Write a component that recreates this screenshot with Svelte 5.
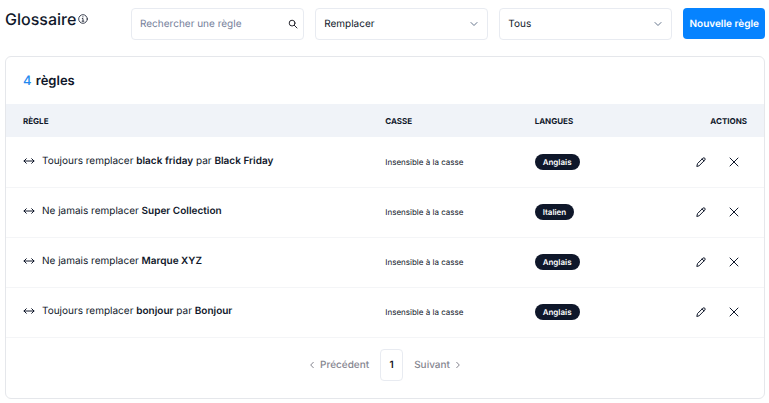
<script>
  let search = $state('');
  let mode = $state('Remplacer');
  let language = $state('Tous');

  const rules = [
    { verb: 'Toujours remplacer', source: 'black friday', target: 'Black Friday', language: 'Anglais' },
    { verb: 'Ne jamais remplacer', source: 'Super Collection', language: 'Italien' },
    { verb: 'Ne jamais remplacer', source: 'Marque XYZ', language: 'Anglais' },
    { verb: 'Toujours remplacer', source: 'bonjour', target: 'Bonjour', language: 'Anglais' }
  ];
</script>

{#snippet chevron()}
  <svg class="chevron" viewBox="0 0 8 8" width="8" height="8" aria-hidden="true"><path d="M1 2.5 4 5.5 7 2.5" /></svg>
{/snippet}

<main>
  <header>
    <h1>
      Glossaire
      <svg viewBox="0 0 10 10" width="10" height="10" aria-hidden="true">
        <circle cx="5" cy="5" r="4.3" />
        <path d="M4.3 4.5H5V7.1M4.1 7.2H5.9M4.9 2.6V3" />
      </svg>
    </h1>
    <div class="field">
      <input type="text" placeholder="Rechercher une règle" aria-label="Rechercher une règle" bind:value={search} />
      <svg class="loupe" viewBox="0 0 10 10" width="10" height="10" aria-hidden="true">
        <circle cx="4.1" cy="4.1" r="2.9" /><path d="M6.3 6.3 9 9" />
      </svg>
    </div>
    <div class="field">
      <select aria-label="Type de règle" bind:value={mode}>
        <option>Remplacer</option>
        <option>Ne pas remplacer</option>
      </select>
      {@render chevron()}
    </div>
    <div class="field">
      <select aria-label="Langue" bind:value={language}>
        <option>Tous</option>
        <option>Anglais</option>
        <option>Italien</option>
      </select>
      {@render chevron()}
    </div>
    <button class="primary" type="button">Nouvelle règle</button>
  </header>

  <section>
    <h2><span>{rules.length}</span> règles</h2>
    <table>
      <thead>
        <tr><th class="rule">RÈGLE</th><th class="case">CASSE</th><th>LANGUES</th><th class="actions">ACTIONS</th></tr>
      </thead>
      <tbody>
        {#each rules as rule}
          <tr>
            <td>
              <div class="sentence">
                <svg viewBox="0 0 12 8" width="12" height="8" aria-hidden="true"><path d="M1 4H11M3.3 1.7 1 4 3.3 6.3M8.7 1.7 11 4 8.7 6.3" /></svg>
                <span>{rule.verb} <strong>{rule.source}</strong>{#if rule.target}{' par '}<strong>{rule.target}</strong>{/if}</span>
              </div>
            </td>
            <td class="small">Insensible à la casse</td>
            <td><span class="badge">{rule.language}</span></td>
            <td>
              <div class="tools">
                <button type="button" aria-label="Modifier">
                  <svg viewBox="0 0 10 10" width="10" height="10" aria-hidden="true"><path d="M.9 9.1 1.5 6.6 6.9 1.2Q7.9.4 8.8 1.2 9.6 2.1 8.8 3.1L3.4 8.5ZM6.1 2 8 3.9" /></svg>
                </button>
                <button type="button" aria-label="Supprimer">
                  <svg viewBox="0 0 10 10" width="10" height="10" aria-hidden="true"><path d="M1 1 9 9M9 1 1 9" /></svg>
                </button>
              </div>
            </td>
          </tr>
        {/each}
      </tbody>
    </table>
    <nav aria-label="Pagination">
      <button type="button"><svg viewBox="0 0 6 8" width="6" height="8" aria-hidden="true"><path d="M4.3 1.3 1.7 4 4.3 6.7" /></svg>Précédent</button>
      <button class="current" type="button" aria-current="page">1</button>
      <button type="button">Suivant<svg viewBox="0 0 6 8" width="6" height="8" aria-hidden="true"><path d="M1.7 1.3 4.3 4 1.7 6.7" /></svg></button>
    </nav>
  </section>
</main>

<style>
  :global(body) {
    background: #fff;
  }
  main {
    padding: 8px 4px 4px 5px;
    color: #0f172a;
    font: 10px/16px Inter, sans-serif;
    text-rendering: geometricPrecision;
  }
  * {
    box-sizing: border-box;
  }
  svg {
    display: block;
    flex: none;
    fill: none;
    stroke: currentColor;
    stroke-width: 1;
    stroke-linecap: round;
    stroke-linejoin: round;
  }
  button,
  input,
  select {
    margin: 0;
    font: inherit;
    color: inherit;
    text-rendering: inherit;
  }
  button {
    padding: 0;
    border: 0;
    background: none;
    cursor: pointer;
  }
  header {
    display: flex;
    gap: 11px;
    margin-bottom: 16px;
  }
  h1 {
    display: flex;
    align-items: center;
    gap: 2px;
    flex: none;
    width: 115px;
    height: 22px;
    margin: 0;
    font-size: 16px;
    font-weight: 500;
  }
  h1 svg {
    stroke-width: 0.8;
  }
  .field {
    position: relative;
    flex: 1;
    min-width: 0;
  }
  input,
  select {
    display: block;
    width: 100%;
    height: 32px;
    padding: 0 24px 0 8px;
    border: 1px solid #e8ebf1;
    border-radius: 4px;
    background: #fff;
    appearance: none;
  }
  input::placeholder {
    color: #75809a;
    opacity: 1;
  }
  .field svg {
    position: absolute;
    top: 12px;
    right: 10px;
    color: #64748b;
    pointer-events: none;
  }
  .field .loupe {
    top: 11px;
    right: 6px;
    color: #27272f;
  }
  .primary {
    flex: none;
    height: 31px;
    padding: 0 6px;
    border-radius: 4px;
    background: #0683ff;
    color: #fff;
    font-weight: 600;
  }
  section {
    border: 1px solid #e5e7eb;
    border-radius: 6px;
  }
  h2 {
    margin: 0;
    padding: 16px 17px 15px;
    font-size: 13px;
    font-weight: 600;
  }
  h2 span {
    margin-right: 1px;
    color: #2388ee;
    font-weight: 500;
  }
  table {
    width: 100%;
    border-collapse: collapse;
    table-layout: fixed;
  }
  th,
  td {
    padding: 0 17px;
  }
  th {
    height: 33px;
    background: #f0f3f8;
    font-size: 8px;
    font-weight: 700;
    text-align: left;
  }
  .rule {
    width: 47.8%;
  }
  .case {
    width: 19.7%;
  }
  th.actions {
    text-align: right;
  }
  td {
    height: 50px;
    border-bottom: 1px solid #f4f5f7;
  }
  .sentence {
    display: flex;
    align-items: center;
    gap: 7px;
    padding-bottom: 2px;
    white-space: nowrap;
  }
  strong {
    font-weight: 600;
  }
  .small {
    font-size: 8px;
    white-space: nowrap;
  }
  .badge {
    display: inline-block;
    padding: 0 8px;
    border-radius: 8px;
    background: #0f172a;
    color: #fff;
    font-size: 8px;
    font-weight: 600;
  }
  .tools {
    display: flex;
    justify-content: flex-end;
    gap: 23px;
    padding-right: 8px;
  }
  nav {
    display: flex;
    align-items: center;
    justify-content: center;
    gap: 11px;
    padding: 11px 0 17px;
    color: #85858f;
    font-weight: 500;
  }
  nav button {
    display: flex;
    align-items: center;
    gap: 5px;
  }
  .current {
    justify-content: center;
    width: 23px;
    height: 32px;
    border: 1px solid #e8ebf1;
    border-radius: 4px;
    color: #18181f;
    font-weight: 600;
  }
</style>
